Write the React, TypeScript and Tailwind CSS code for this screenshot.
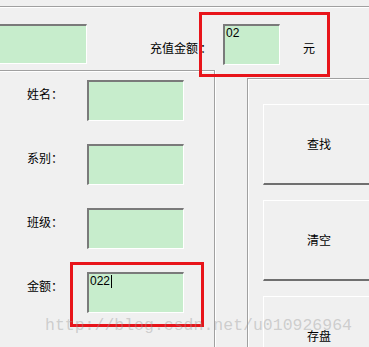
import React from "react";

const boxCls =
  "bg-[#c7edcc] border-solid border-t-2 border-l-2 border-r border-b border-t-[#7a7a7a] border-l-[#7a7a7a] border-r-white border-b-white";

function TextBox({ className, children }: { className: string; children?: React.ReactNode }) {
  return (
    <div className={`${boxCls} ${className} pl-[1px] pt-[1px] text-[12px] leading-[13px] text-black font-['Liberation_Sans',sans-serif]`}>
      {children}
    </div>
  );
}

function Row({ label, children }: { label: string; children?: React.ReactNode }) {
  return (
    <div className="flex items-start h-[41px]">
      <span className="ml-[27px] mt-[8px] w-[60px] leading-[12px]">{label}</span>
      <TextBox className="w-[97px] h-[41px]">{children}</TextBox>
    </div>
  );
}

function Btn({ label }: { label: string }) {
  return (
    <div className="h-[81px] w-[113px] shrink-0 flex items-center justify-center bg-[#f0f0f0] border-solid border-t border-l border-b-2 border-r-2 border-t-white border-l-white border-b-[#6f6f6f] border-r-[#6f6f6f] leading-[12px]">
      {label}
    </div>
  );
}

export default function App() {
  return (
    <div className="relative w-[369px] h-[347px] overflow-hidden bg-[#f0f0f0] pt-[6px] text-[12px] text-black font-['Noto_Sans_CJK_SC',sans-serif]">
      <div className="h-[2px] border-solid border-t border-t-[#a0a0a0] bg-white" />

      <div className="flex items-center mt-[16px] h-[41px]">
        <TextBox className="-ml-[2px] w-[89px] h-[40px] self-start" />
        <div className="ml-[63px] mt-[7px] w-[60px] shrink-0 flex leading-[12px] whitespace-nowrap">
          <span>充值金额</span>
          <span className="ml-[2px]">：</span>
        </div>
        <TextBox className="ml-[13px] w-[57px] h-[41px] shrink-0">02</TextBox>
        <div className="ml-[23px] mt-[7px] shrink-0 leading-[12px] whitespace-nowrap">元</div>
      </div>

      <div className="flex items-start mt-[5px]">
        <div className="w-[215px] h-[290px] shrink-0 border-solid border-t border-r border-t-[#a0a0a0] border-r-[#a0a0a0] shadow-[inset_0_1px_0_#fff,1px_0_0_#fff] pt-[9px] flex flex-col gap-[23px]">
          <Row label="姓名：" />
          <Row label="系别：" />
          <Row label="班级：" />
          <Row label="金额：">
            <span className="inline-flex items-start">
              022<span className="inline-block w-[1px] h-[13px] bg-black ml-[1px]" />
            </span>
          </Row>
        </div>
        <div className="ml-[32px] mt-[8px] w-[140px] h-[280px] shrink-0 border-solid border-t border-l border-t-[#a0a0a0] border-l-[#a0a0a0] shadow-[inset_1px_1px_0_#fff] pl-[15px] pt-[25px] flex flex-col gap-[15px]">
          <Btn label="查找" />
          <Btn label="清空" />
          <Btn label="存盘" />
        </div>
      </div>

      <div className="absolute left-[199px] top-[12px] w-[131px] h-[65px] border-[3px] border-solid border-[#e8141a]" />
      <div className="absolute left-[70px] top-[262px] w-[134px] h-[65px] border-[3px] border-solid border-[#e8141a]" />

      <div className="absolute left-[45px] top-[318px] whitespace-nowrap text-[16.5px] leading-[16.5px] text-[rgba(150,150,150,0.4)] font-['Liberation_Mono',monospace]">
        http://blog.csdn.net/u010926964
      </div>
    </div>
  );
}
